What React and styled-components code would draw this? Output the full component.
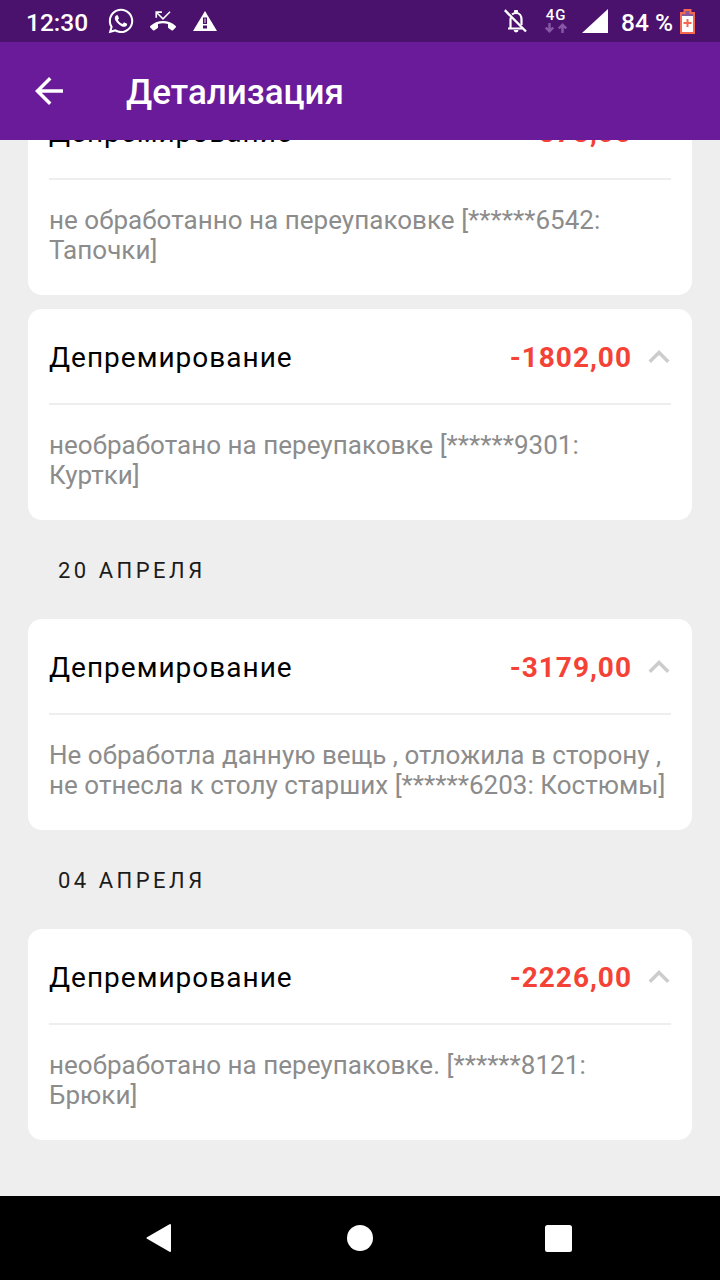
import React from 'react';
import styled, { createGlobalStyle } from 'styled-components';
import { FaWhatsapp } from 'react-icons/fa';
import { MdPhoneMissed, MdArrowBack, MdKeyboardArrowUp } from 'react-icons/md';

const GlobalStyle = createGlobalStyle`
  * { box-sizing: border-box; }
  body { margin: 0; background: #eeeeee; font-family: Roboto, sans-serif; }
  svg { display: block; flex: none; }
`;

const Screen = styled.div`
  width: 720px;
  height: 1280px;
  display: flex;
  flex-direction: column;
  overflow: hidden;
  background: #eeeeee;
`;

const StatusBar = styled.div`
  flex: none;
  height: 42px;
  padding: 0 25px 0 26px;
  display: flex;
  align-items: center;
  justify-content: space-between;
  background: #4b126d;
  color: #fff;
`;

const StatusGroup = styled.div`
  display: flex;
  align-items: center;
`;

const Clock = styled.span`
  width: 81px;
  padding-top: 3px;
  font-size: 24.5px;
  line-height: 30px;
  font-weight: 500;
`;

const IconSlot = styled.span`
  width: ${(p) => p.$width || 42}px;
  display: flex;
`;

const Network = styled.div`
  width: 24px;
  margin-left: 17px;
  display: flex;
  flex-direction: column;
  align-items: center;
  gap: 1px;
  font-size: 15px;
  line-height: 13px;
  font-weight: 500;
  letter-spacing: 1px;
`;

const Signal = styled.svg`
  margin: 0 13px 0 14px;
`;

const Percent = styled.span`
  width: 59px;
  padding-top: 3px;
  font-size: 24.5px;
  line-height: 30px;
  font-weight: 500;
  white-space: pre;
`;

const AppBar = styled.header`
  flex: none;
  height: 98px;
  padding-left: 28px;
  display: flex;
  align-items: center;
  gap: 56px;
  background: #6a1b9a;
  color: #fff;
`;

const Title = styled.h1`
  margin: 0;
  padding-top: 3px;
  font-size: 35px;
  line-height: 42px;
  font-weight: 500;
`;

const List = styled.main`
  flex: 1;
  min-height: 0;
  overflow: hidden;
  padding: 0 28px;
  display: flex;
  flex-direction: column;
`;

const Feed = styled.div`
  margin-top: -56px;
`;

const Card = styled.section`
  height: 211px;
  border-radius: 14px;
  padding: 0 21px;
  background: #fff;
  & + & { margin-top: 14px; }
`;

const CardHead = styled.div`
  height: 96px;
  display: flex;
  align-items: center;
  border-bottom: 2px solid #eeeeee;
  color: #000;
`;

const Kind = styled.span`
  flex: 1;
  padding-top: 3px;
  font-size: 28px;
  line-height: 34px;
  letter-spacing: 1px;
`;

const Amount = styled.span`
  padding-top: 3px;
  font-size: 28px;
  line-height: 34px;
  font-weight: 700;
  letter-spacing: 1px;
  color: #f44336;
`;

const Chevron = styled(MdKeyboardArrowUp)`
  margin: 2px -8.5px 0 5.5px;
  color: #cccccc;
`;

const Note = styled.p`
  margin: 0;
  padding-top: 25px;
  font-size: 26px;
  line-height: 30px;
  letter-spacing: 0.03px;
  color: #8c8c8c;
  white-space: pre;
`;

const DateLabel = styled.h2`
  margin: 0;
  height: 99px;
  padding: 2px 0 0 30px;
  display: flex;
  align-items: center;
  font-size: 22px;
  font-weight: 400;
  letter-spacing: 3.5px;
  color: #1c1c1c;
`;

const NavBar = styled.nav`
  flex: none;
  height: 84px;
  padding-left: 146px;
  display: flex;
  align-items: center;
  gap: 172px;
  background: #000;
`;

const sections = [
  {
    items: [
      { amount: '-873,00', note: 'не обработанно на переупаковке [******6542:\nТапочки]' },
      { amount: '-1802,00', note: 'необработано на переупаковке [******9301:\nКуртки]' },
    ],
  },
  {
    date: '20 АПРЕЛЯ',
    items: [
      {
        amount: '-3179,00',
        note: 'Не обработла данную вещь , отложила в сторону ,\nне отнесла к столу старших [******6203: Костюмы]',
      },
    ],
  },
  {
    date: '04 АПРЕЛЯ',
    items: [{ amount: '-2226,00', note: 'необработано на переупаковке. [******8121:\nБрюки]' }],
  },
];

function Warning() {
  return (
    <svg width="24" height="20" viewBox="0 0 24 20">
      <path d="M12 0L24 20H0z" fill="#fff" />
      <path d="M10 6.500h4v6.500h-4zM10 14.500h4v3h-4z" fill="#4b126d" />
      <path d="M11.300 7.500h1.400v4.500h-1.400z" fill="#b79fc6" />
    </svg>
  );
}

function BellOff() {
  return (
    <svg width="23" height="24" viewBox="0 0 23 24" fill="none" stroke="#fff" strokeWidth="2.200">
      <path d="M8 5.500C9 4.600 10.400 4 12 4c3.500 0 5.500 2.900 5.500 6.500v5.500M7 8.500c-.4.800-.5 1.500-.5 2.500v8M4 19.500H18.500" />
      <path d="M10.500 3.500V1.500h3v2" fill="#fff" strokeWidth="1" />
      <path d="M9.700 21h4.800a2.400 2.400 0 0 1-4.800 0z" fill="#fff" stroke="none" />
      <path d="M.8 1.200L22 22.500" strokeWidth="2.400" />
    </svg>
  );
}

function DataArrows() {
  return (
    <svg width="22" height="10" viewBox="0 0 22 10" fill="none" stroke="#8758a5" strokeWidth="2.400">
      <path d="M4.500 0v8M.8 4.500l3.700 3.700 3.700-3.700M17.500 10V2M13.800 5.500l3.700-3.700 3.700 3.700" />
    </svg>
  );
}

function Battery() {
  return (
    <svg width="15" height="25" viewBox="0 0 15 25">
      <path d="M4.500 1h6v3H14v20H1V4h3.500z" fill="#8a5798" stroke="#f4694f" strokeWidth="2" />
      <path d="M2 7h11v16H2z" fill="#fff" />
      <path d="M7.500 10v8M3.500 14h8" stroke="#f4694f" strokeWidth="2" />
    </svg>
  );
}

export default function App() {
  return (
    <Screen>
      <GlobalStyle />
      <StatusBar>
        <StatusGroup>
          <Clock>12:30</Clock>
          <IconSlot $width={43}><FaWhatsapp size={28} /></IconSlot>
          <IconSlot $width={43}><MdPhoneMissed size={26} /></IconSlot>
          <IconSlot><Warning /></IconSlot>
        </StatusGroup>
        <StatusGroup>
          <BellOff />
          <Network>
            <span>4G</span>
            <DataArrows />
          </Network>
          <Signal width="26" height="24" viewBox="0 0 26 24">
            <path d="M0 24L26 0v24z" fill="#fff" />
          </Signal>
          <Percent>84 %</Percent>
          <Battery />
        </StatusGroup>
      </StatusBar>
      <AppBar>
        <MdArrowBack size={42} />
        <Title>Детализация</Title>
      </AppBar>
      <List>
        <Feed>
          {sections.map((section, i) => (
            <React.Fragment key={i}>
              {section.date && <DateLabel>{section.date}</DateLabel>}
              {section.items.map((item) => (
                <Card key={item.amount}>
                  <CardHead>
                    <Kind>Депремирование</Kind>
                    <Amount>{item.amount}</Amount>
                    <Chevron size={42} />
                  </CardHead>
                  <Note>{item.note}</Note>
                </Card>
              ))}
            </React.Fragment>
          ))}
        </Feed>
      </List>
      <NavBar>
        <svg width="29" height="30" viewBox="0 0 29 30">
          <path d="M1.500 15L24 2v26z" fill="#fff" stroke="#fff" strokeWidth="2" strokeLinejoin="round" />
        </svg>
        <svg width="26" height="26" viewBox="0 0 26 26">
          <circle cx="13" cy="13" r="13" fill="#fff" />
        </svg>
        <svg width="27" height="27" viewBox="0 0 27 27">
          <rect width="27" height="27" rx="2.500" fill="#fff" />
        </svg>
      </NavBar>
    </Screen>
  );
}
